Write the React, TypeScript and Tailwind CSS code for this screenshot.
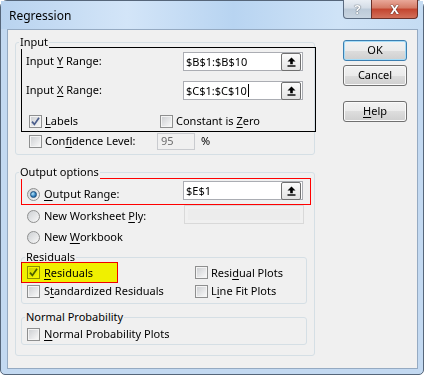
import type { ReactNode } from "react";

function U({ children }: { children: ReactNode }) {
  return <span className="underline decoration-1 underline-offset-[2px]">{children}</span>;
}

function CheckBox({ checked = false }: { checked?: boolean }) {
  return (
    <span className="flex h-[13px] w-[13px] shrink-0 border border-[#8e8f8f] bg-[#f4f4f4] p-[1px]">
      <span className="relative flex h-full w-full items-center justify-center bg-[linear-gradient(135deg,#cfd1d4,#f7f7f7)]">
        {checked && (
          <svg width="9" height="9" viewBox="0 0 9 9" className="absolute">
            <path d="M1 4.6 L3.4 7.4 L8 0.8" fill="none" stroke="#4b5e8c" strokeWidth="1.7" />
          </svg>
        )}
      </span>
    </span>
  );
}

function Radio({ on = false }: { on?: boolean }) {
  return (
    <span className="flex h-[13px] w-[13px] shrink-0 items-center justify-center rounded-full border border-[#8e8f8f] bg-[linear-gradient(135deg,#cdd0d3,#f8f8f8)]">
      {on && (
        <span className="h-[7px] w-[7px] rounded-full border border-[#1d4f7c] bg-[radial-gradient(circle_at_35%_35%,#b5e6fb,#2d7dbd_60%,#1b5489)]" />
      )}
    </span>
  );
}

function CollapseBtn() {
  return (
    <span className="flex h-[18px] w-[20px] shrink-0 items-center justify-center rounded-[2px] border border-[#707070] bg-[linear-gradient(#fbfbfb,#e3e3e3)]">
      <svg width="9" height="10" viewBox="0 0 9 10">
        <path d="M4.5 0.5 L8.5 4.5 H5.8 V7.2 H3.2 V4.5 H0.5 Z" fill="#000" />
        <rect x="0.5" y="8.3" width="8" height="1.4" fill="#000" />
      </svg>
    </span>
  );
}

function RangeBox({ value, caret = false }: { value: string; caret?: boolean }) {
  return (
    <div className="flex h-[19px] w-[120px] shrink-0 items-center border border-[#abadb3] bg-white pl-[2px] pr-[1px]">
      <span className="flex flex-1 items-center leading-[14px]">
        {value}
        {caret && <span className="ml-px inline-block h-[13px] w-px bg-black" />}
      </span>
      <CollapseBtn />
    </div>
  );
}

function Group({ label, className, children }: { label: string; className: string; children?: ReactNode }) {
  return (
    <div className={`relative rounded-[3px] border border-[#d5dfe5] ${className}`}>
      <span className="absolute left-[3px] top-[-9px] bg-[#f0f0f0] px-px leading-[15px]">{label}</span>
      {children}
    </div>
  );
}

function Btn({ children, def = false }: { children: ReactNode; def?: boolean }) {
  return (
    <div
      className={`flex h-[21px] w-[64px] items-center justify-center rounded-[3px] border bg-[linear-gradient(#f2f2f2,#ebebeb_50%,#dddddd_50%,#cfcfcf)] ${
        def ? "border-[#3c7fb1] shadow-[inset_0_0_0_1px_#a6dcf7]" : "border-[#707070] shadow-[inset_0_0_0_1px_#fafafa]"
      }`}
    >
      {children}
    </div>
  );
}

export default function App() {
  return (
    <div className="h-[376px] w-[426px] bg-white font-['Noto_Sans',sans-serif] text-[11px] text-black">
      <div className="flex h-[375px] w-[424px] flex-col rounded-b-[5px] rounded-t-[7px] border border-[#56667a] bg-[#c3d9f1] pb-[5px] pl-[6px] pr-[5px]">
        {/* title bar */}
        <div className="flex h-[28px] shrink-0 items-start bg-[linear-gradient(90deg,#b9d3ef,#d3e5f8_30%,#b8d4f1_55%,#cfe3f7_80%,#c5dcf3)] -mx-[6px] -mr-[5px] px-[6px] pr-[5px]">
          <span className="ml-[2px] mt-[7px] text-[12px] leading-[15px]">Regression</span>
          <div className="ml-auto -mt-px flex">
            <div className="flex h-[19px] w-[29px] items-center justify-center rounded-bl-[4px] border border-t-0 border-[#5b6b80] bg-[linear-gradient(#e9eef4,#d3dce6_45%,#bccad8_50%,#c9d5e1)] text-[13px] font-bold leading-none text-white [text-shadow:0_0_1px_#46525f,0_0_1px_#46525f]">
              ?
            </div>
            <div className="-ml-px flex h-[19px] w-[47px] items-center justify-center rounded-br-[4px] border border-t-0 border-[#6b3028] bg-[linear-gradient(#e9a899,#d47a65_45%,#c3442e_50%,#d2705a)] text-[13px] font-bold leading-none text-white [text-shadow:0_0_1px_#3b1410,0_0_1px_#3b1410]">
              X
            </div>
          </div>
        </div>

        {/* client area */}
        <div className="flex flex-1 border border-[#95aac2] bg-[#f0f0f0]">
          <div className="ml-[7px] flex w-[300px] flex-col">
            {/* Input */}
            <Group label="Input" className="mt-[12px] h-[113px] w-[300px]">
              <div className="ml-[5px] mt-[4px] h-[85px] w-[295px] border border-black">
                <div className="mt-[4px] flex h-[19px] items-center">
                  <span className="w-[161px] pl-[4px]">
                    Input <U>Y</U> Range:
                  </span>
                  <RangeBox value="$B$1:$B$10" />
                </div>
                <div className="mt-[10px] flex h-[19px] items-center">
                  <span className="w-[161px] pl-[4px]">
                    Input <U>X</U> Range:
                  </span>
                  <RangeBox value="$C$1:$C$10" caret />
                </div>
                <div className="mt-[15px] flex h-[13px] items-center pl-[7px]">
                  <span className="flex w-[131px] items-center gap-[3px]">
                    <CheckBox checked />
                    <span>
                      <U>L</U>abels
                    </span>
                  </span>
                  <span className="flex items-center gap-[3px]">
                    <CheckBox />
                    <span>
                      Constant is <U>Z</U>ero
                    </span>
                  </span>
                </div>
              </div>
              <div className="ml-[13px] mt-px flex h-[17px] items-center">
                <span className="flex w-[128px] items-center gap-[3px]">
                  <CheckBox />
                  <span>
                    Con<U>f</U>idence Level:
                  </span>
                </span>
                <span className="flex h-[17px] w-[38px] items-center border border-[#c9cbcf] bg-[#f0f0f0] pl-[3px] text-[#6d6d6d]">
                  95
                </span>
                <span className="ml-[6px]">%</span>
              </div>
            </Group>

            {/* Output options */}
            <Group label="Output options" className="mt-[17px] h-[184px] w-[300px]">
              <div className="ml-[5px] mt-[5px] flex h-[27px] w-[290px] items-start border border-[#ff0000]">
                <span className="ml-[5px] mt-[9px] flex h-[13px] w-[156px] items-center gap-[4px]">
                  <Radio on />
                  <span>
                    <U>O</U>utput Range:
                  </span>
                </span>
                <div className="mt-[2px]">
                  <RangeBox value="$E$1" />
                </div>
              </div>
              <div className="flex items-start">
                <span className="ml-[11px] mt-[5px] flex h-[13px] w-[157px] items-center gap-[4px]">
                  <Radio />
                  <span>
                    New Worksheet <U>P</U>ly:
                  </span>
                </span>
                <span className="h-[19px] w-[120px] border border-[#d9d9d9] bg-[#f0f0f0] p-[3px]">
                  <span className="block h-full w-full bg-[#ececec]" />
                </span>
              </div>
              <span className="ml-[11px] mt-[7px] flex h-[13px] items-center gap-[4px]">
                <Radio />
                <span>
                  New <U>W</U>orkbook
                </span>
              </span>

              {/* Residuals */}
              <Group label="Residuals" className="ml-[5px] mt-[13px] h-[47px] w-[286px]">
                <div className="mt-[4px] flex h-[21px] items-end">
                  <span className="relative -ml-px flex h-[21px] w-[97px] items-end pb-[2px] pl-[6px]">
                    <span className="flex items-center gap-[4px]">
                      <CheckBox checked />
                      <span>
                        <U>R</U>esiduals
                      </span>
                    </span>
                    <span className="pointer-events-none absolute inset-0 border border-[#ff0000] bg-[#ffff00] mix-blend-multiply" />
                  </span>
                  <span className="ml-[77px] flex items-center gap-[3px] pb-[2px]">
                    <CheckBox />
                    <span>
                      Resi<U>d</U>ual Plots
                    </span>
                  </span>
                </div>
                <div className="mt-[2px] flex h-[13px] items-center">
                  <span className="ml-[5px] flex w-[168px] items-center gap-[4px]">
                    <CheckBox />
                    <span>
                      S<U>t</U>andardized Residuals
                    </span>
                  </span>
                  <span className="flex items-center gap-[3px]">
                    <CheckBox />
                    <span>
                      L<U>i</U>ne Fit Plots
                    </span>
                  </span>
                </div>
              </Group>

              {/* Normal Probability */}
              <Group label="Normal Probability" className="ml-[5px] mt-[13px] h-[28px] w-[286px]">
                <span className="ml-[5px] mt-[10px] flex h-[13px] items-center gap-[4px]">
                  <CheckBox />
                  <span>
                    <U>N</U>ormal Probability Plots
                  </span>
                </span>
              </Group>
            </Group>
          </div>

          {/* buttons */}
          <div className="ml-[28px] flex flex-col">
            <div className="mt-[10px]">
              <Btn def>OK</Btn>
            </div>
            <div className="mt-[4px]">
              <Btn>Cancel</Btn>
            </div>
            <div className="mt-[15px]">
              <Btn>
                <span>
                  <U>H</U>elp
                </span>
              </Btn>
            </div>
          </div>
        </div>
      </div>
    </div>
  );
}
